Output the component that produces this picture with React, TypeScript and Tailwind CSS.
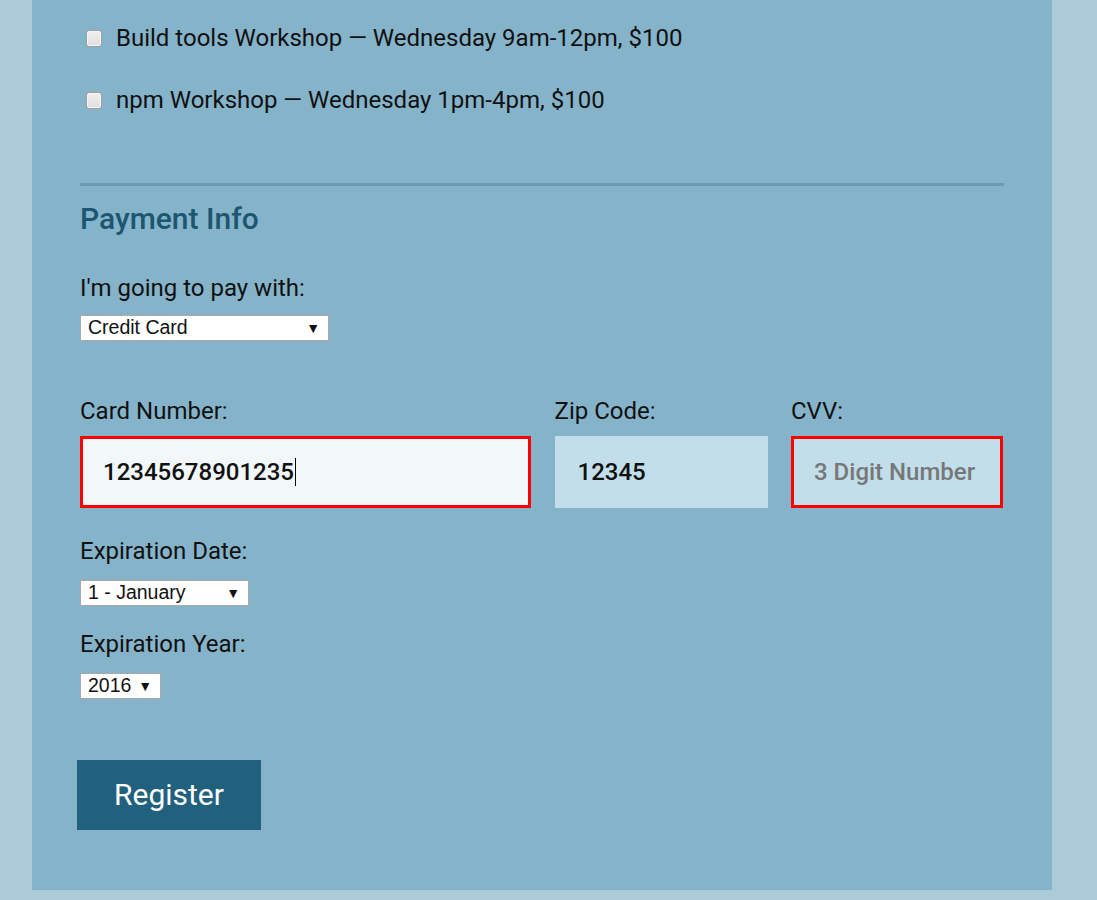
import React from "react";

function Check({ label }: { label: string }) {
  return (
    <div className="flex items-center h-[28px]">
      <div className="ml-[6px] w-[16px] h-[17px] rounded-[3px] border border-[#a0a0a0] bg-gradient-to-b from-[#f0f0f0] to-[#dedede] shadow-[inset_0_0_0_1px_#f6f6f6]" />
      <span className="ml-[14px]">{label}</span>
    </div>
  );
}

function FakeSelect({ value, w }: { value: string; w: string }) {
  return (
    <div
      className={`${w} h-[26px] bg-white border border-[#a9a9a9] flex items-center justify-between pl-[7px] pr-[8px] text-[19.5px] text-[#111] leading-none`}
      style={{ fontFamily: '"Liberation Sans", Arial, sans-serif' }}
    >
      <span>{value}</span>
      <span className="text-[14px]">▼</span>
    </div>
  );
}

export default function App() {
  return (
    <div
      className="min-h-[900px] bg-[#abcbd8] pl-[32px] pr-[45px] text-[#111] text-[24px] leading-[28px]"
      style={{ fontFamily: 'Roboto, "Noto Sans", sans-serif' }}
    >
      <div className="bg-[#85b4ca] pl-[48px] pr-[48px] pt-[24px] pb-[60px] flex flex-col">
        <Check label="Build tools Workshop — Wednesday 9am-12pm, $100" />
        <div className="mt-[34px]">
          <Check label="npm Workshop — Wednesday 1pm-4pm, $100" />
        </div>
        <div className="mt-[69px] h-[3px] bg-[#6a9bb1]" />
        <h2 className="mt-[15px] h-[36px] leading-[36px] text-[30px] font-medium text-[#1c5671]">
          Payment Info
        </h2>
        <div className="mt-[37px]">I'm going to pay with:</div>
        <div className="mt-[13px]">
          <FakeSelect value="Credit Card" w="w-[249px]" />
        </div>
        <div className="mt-[56px] grid grid-cols-[451px_213px_212px] gap-x-[23.5px]">
          <div>Card Number:</div>
          <div>Zip Code:</div>
          <div>CVV:</div>
          <div className="mt-[11px] h-[72px] border-[3px] border-[#ff0000] bg-[#f2f7fa] flex items-center pl-[20px] font-medium">
            <span>12345678901235</span>
            <span className="w-px h-[28px] bg-black ml-[1px]" />
          </div>
          <div className="mt-[11px] h-[72px] border-[3px] border-transparent bg-[#c1deea] flex items-center pl-[20px] font-medium">
            12345
          </div>
          <div className="mt-[11px] h-[72px] border-[3px] border-[#ff0000] bg-[#c1deea] flex items-center pl-[20px] font-medium text-[#777]">
            3 Digit Number
          </div>
        </div>
        <div className="mt-[29px]">Expiration Date:</div>
        <div className="mt-[15px]">
          <FakeSelect value="1 - January" w="w-[169px]" />
        </div>
        <div className="mt-[24px]">Expiration Year:</div>
        <div className="mt-[15px]">
          <FakeSelect value="2016" w="w-[81px]" />
        </div>
        <button className="mt-[61px] -ml-[3px] w-[184px] h-[70px] bg-[#22617e] text-white text-[30px] leading-none">
          Register
        </button>
      </div>
    </div>
  );
}
